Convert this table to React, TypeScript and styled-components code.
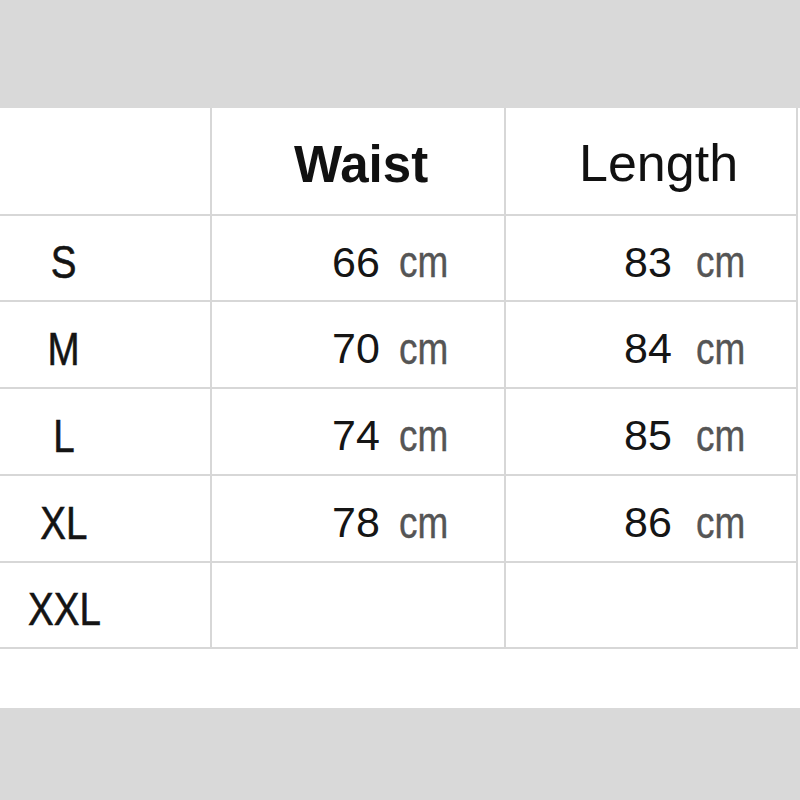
import React from "react";
import styled, { createGlobalStyle } from "styled-components";

const Global = createGlobalStyle`
  html, body { margin: 0; padding: 0; background: #ffffff; }
  body { font-family: "Liberation Sans", Arial, sans-serif; }
`;

const Page = styled.div`
  width: 800px;
  height: 800px;
  display: flex;
  flex-direction: column;
  background: #ffffff;
  overflow: hidden;
`;

const Band = styled.div<{ $h: number }>`
  height: ${(p) => p.$h}px;
  flex: none;
  background: #d9d9d9;
`;

const Sheet = styled.div`
  flex: 1;
  background: #ffffff;
`;

const Grid = styled.div`
  display: grid;
  grid-template-columns: 212px 294px 292px;
  grid-template-rows: 108px 86px 87px 87px 87px 86px;
`;

const Cell = styled.div<{ $pl?: number; $pt?: number; $center?: boolean }>`
  box-sizing: border-box;
  border-right: 2px solid #d7d7d7;
  border-bottom: 2px solid #d7d7d7;
  display: flex;
  align-items: center;
  justify-content: ${(p) => (p.$center ? "center" : "flex-start")};
  padding-left: ${(p) => p.$pl ?? 0}px;
  padding-top: ${(p) => p.$pt ?? 0}px;
  ${(p) => (p.$center ? "padding-right: 82px;" : "")}
  line-height: 1;
  white-space: nowrap;
`;

const Head = styled.span<{ $bold?: boolean; $size: number }>`
  font-family: "Liberation Sans", Arial, sans-serif;
  font-size: ${(p) => p.$size}px;
  font-weight: ${(p) => (p.$bold ? 700 : 400)};
  color: #111111;
`;

const SizeLabel = styled.span`
  display: inline-block;
  font-family: "Liberation Sans", Arial, sans-serif;
  font-size: 47px;
  color: #141414;
  -webkit-text-stroke: 0.6px #141414;
  transform: scaleX(0.82);
  transform-origin: center;
`;

const Num = styled.span`
  font-family: "Liberation Sans", Arial, sans-serif;
  font-size: 43px;
  color: #151515;
`;

const Unit = styled.span<{ $gap: number }>`
  display: inline-block;
  font-family: "Liberation Sans", Arial, sans-serif;
  font-size: 44px;
  color: #555555;
  -webkit-text-stroke: 0.4px #555555;
  margin-left: ${(p) => p.$gap}px;
  transform: scaleX(0.84);
  transform-origin: left center;
`;

const rows: { size: string; waist?: string; length?: string }[] = [
  { size: "S", waist: "66", length: "83" },
  { size: "M", waist: "70", length: "84" },
  { size: "L", waist: "74", length: "85" },
  { size: "XL", waist: "78", length: "86" },
  { size: "XXL" },
];

export default function App() {
  return (
    <>
      <Global />
      <Page>
        <Band $h={108} />
        <Sheet>
          <Grid>
            <Cell />
            <Cell $pl={82} $pt={7}>
              <Head $bold $size={51}>Waist</Head>
            </Cell>
            <Cell $pl={73} $pt={4}>
              <Head $size={52}>Length</Head>
            </Cell>
            {rows.map((r) => (
              <React.Fragment key={r.size}>
                <Cell $center $pt={7}>
                  <SizeLabel>{r.size}</SizeLabel>
                </Cell>
                <Cell $pl={120} $pt={8}>
                  {r.waist && (
                    <>
                      <Num>{r.waist}</Num>
                      <Unit $gap={19}>cm</Unit>
                    </>
                  )}
                </Cell>
                <Cell $pl={118} $pt={8}>
                  {r.length && (
                    <>
                      <Num>{r.length}</Num>
                      <Unit $gap={24}>cm</Unit>
                    </>
                  )}
                </Cell>
              </React.Fragment>
            ))}
          </Grid>
        </Sheet>
        <Band $h={92} />
      </Page>
    </>
  );
}
